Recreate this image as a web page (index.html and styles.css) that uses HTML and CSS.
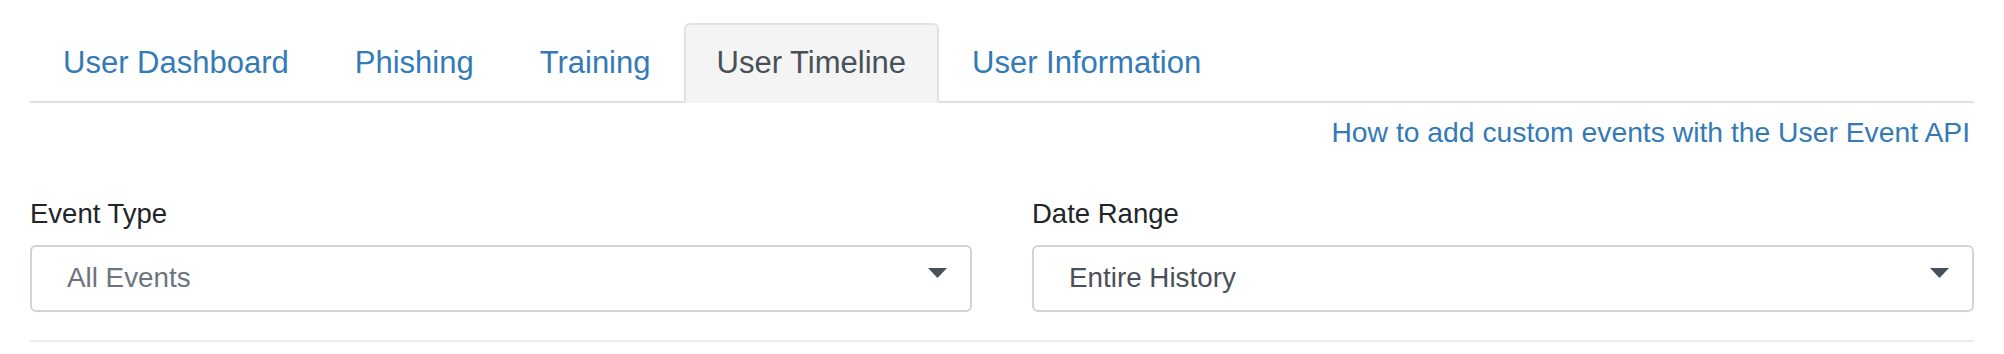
FILE: index.html
```html
<!DOCTYPE html>
<html lang="en">
<head>
    <meta charset="UTF-8">
    <meta name="viewport" content="width=device-width, initial-scale=1.0">
    <title>User Timeline</title>
    <link rel="stylesheet" href="styles.css">
</head>
<body>

    <div class="page">
        <ul class="nav-tabs">
            <li><a class="tab" href="#">User Dashboard</a></li>
            <li><a class="tab" href="#">Phishing</a></li>
            <li><a class="tab" href="#">Training</a></li>
            <li><a class="tab active" href="#">User Timeline</a></li>
            <li><a class="tab" href="#">User Information</a></li>
        </ul>

        <div class="help-row">
            <a href="#">How to add custom events with the User Event API</a>
        </div>

        <div class="filters">
            <div class="field">
                <label>Event Type</label>
                <div class="select">
                    <span class="placeholder">All Events</span>
                    <svg class="arrow" width="19" height="10" viewBox="0 0 19 10"><path d="M0 0H19L9.5 10Z"/></svg>
                </div>
            </div>
            <div class="field">
                <label>Date Range</label>
                <div class="select">
                    <span>Entire History</span>
                    <svg class="arrow" width="19" height="10" viewBox="0 0 19 10"><path d="M0 0H19L9.5 10Z"/></svg>
                </div>
            </div>
        </div>

        <hr class="divider">
    </div>

</body>
</html>
```

FILE: styles.css
```css
body {
    font-family: "Liberation Sans", Arial, sans-serif;
    margin: 0;
    padding: 0;
    background-color: #fff;
    color: #212529;
}

.page {
    padding: 23px 30px 0;
}

.nav-tabs {
    display: flex;
    list-style: none;
    margin: 0;
    padding: 0;
    border-bottom: 2px solid #dee2e6;
}

.tab {
    display: block;
    padding: 15px 31px;
    margin-bottom: -2px;
    border: 2px solid transparent;
    border-radius: 6px 6px 0 0;
    font-size: 31px;
    line-height: 46px;
    color: #337ab7;
    text-decoration: none;
}

.tab.active {
    background-color: #f4f4f4;
    border-color: #dee2e6 #dee2e6 transparent;
    color: #495057;
}

.help-row {
    margin-top: 8px;
    padding-right: 4px;
    text-align: right;
    font-size: 28.3px;
    line-height: 42px;
}

.help-row a {
    color: #337ab7;
    text-decoration: none;
}

.filters {
    display: grid;
    grid-template-columns: 1fr 1fr;
    column-gap: 60px;
    margin-top: 41px;
}

.field label {
    display: block;
    margin-bottom: 10px;
    font-size: 27.5px;
    line-height: 40.5px;
    color: #212529;
}

.select {
    display: flex;
    align-items: center;
    justify-content: space-between;
    box-sizing: border-box;
    height: 67px;
    padding: 0 23px 0 35px;
    border: 2px solid #ced4da;
    border-radius: 6px;
    font-size: 27.8px;
    line-height: 40px;
    color: #495057;
}

.select .placeholder {
    color: #6c757d;
}

.arrow {
    fill: #495057;
    margin-bottom: 11px;
}

.divider {
    margin: 28px 0 0;
    border: 0;
    border-top: 2px solid #e9ecef;
}
```
